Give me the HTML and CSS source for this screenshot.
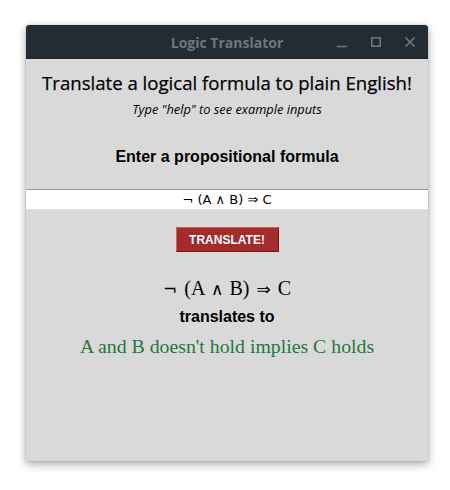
FILE: index.html
```html
<!DOCTYPE html>
<html>
<head>
<meta charset="utf-8">
<title>Logic Translator</title>
<link rel="stylesheet" href="styles.css">
</head>
<body>
<div class="window">
  <div class="titlebar">
    <span class="title">Logic Translator</span>
    <div class="controls">
      <svg class="ctl" width="12" height="12" viewBox="0 0 12 12"><path d="M1 10.5h10" stroke="#6d777e" stroke-width="1.6" fill="none"/></svg>
      <svg class="ctl" width="12" height="12" viewBox="0 0 12 12"><rect x="1.8" y="1.8" width="8.4" height="8.4" stroke="#6d777e" stroke-width="1.6" fill="none"/></svg>
      <svg class="ctl" width="12" height="12" viewBox="0 0 12 12"><path d="M1.5 1.5l9 9M10.5 1.5l-9 9" stroke="#6d777e" stroke-width="1.7" fill="none"/></svg>
    </div>
  </div>
  <div class="content">
    <h1 class="heading">Translate a logical formula to plain English!</h1>
    <p class="hint">Type "help" to see example inputs</p>
    <h2 class="label">Enter a propositional formula</h2>
    <input class="formula-input" type="text" value="¬ (A ∧ B) ⇒ C">
    <button class="translate-btn">TRANSLATE!</button>
    <div class="math"><span class="op">¬</span><span>(A</span><span class="op bin">∧</span><span>B)</span><span class="op rel">⇒</span><span>C</span></div>
    <div class="translates">translates to</div>
    <div class="result">A and B doesn't hold implies C holds</div>
  </div>
</div>
</body>
</html>
```
FILE: styles.css
```css
html, body {
  margin: 0;
  padding: 0;
  background: #ffffff;
}
body {
  padding: 25px 0 0 26px;
  height: 490px;
  box-sizing: border-box;
}
.window {
  width: 402px;
  height: 436px;
  display: flex;
  flex-direction: column;
  border-radius: 3px 3px 0 0;
  box-shadow: 0 3px 10px rgba(0,0,0,0.35), 0 0 2px rgba(0,0,0,0.2);
  overflow: hidden;
}
.titlebar {
  height: 34px;
  flex: none;
  background: #232c32;
  display: flex;
  align-items: center;
  justify-content: center;
  position: relative;
}
.title {
  font-family: "Open Sans", sans-serif;
  font-weight: 700;
  font-size: 14px;
  color: #6d777e;
}
.controls {
  position: absolute;
  right: 12px;
  top: 11px;
  display: flex;
  gap: 22px;
}
.ctl {
  display: block;
}
.content {
  flex: 1;
  background: #d9d9d9;
  display: flex;
  flex-direction: column;
  align-items: center;
}
.heading {
  font-family: "Open Sans", sans-serif;
  font-weight: 500;
  font-size: 18.6px;
  color: #000;
  margin: 11px 0 0;
  line-height: 26px;
  -webkit-text-stroke: 0.25px #000;
}
.hint {
  font-family: "Open Sans", sans-serif;
  font-style: italic;
  font-weight: 500;
  font-size: 12.8px;
  color: #000;
  margin: 4px 0 0;
  line-height: 18px;
}
.label {
  font-family: "Liberation Sans", Arial, sans-serif;
  font-weight: 700;
  font-size: 16px;
  color: #000;
  margin: 29px 0 0;
  line-height: 20px;
}
.formula-input {
  align-self: stretch;
  margin: 22px 0 0;
  height: 21px;
  box-sizing: border-box;
  border: none;
  border-top: 1px solid #999999;
  border-bottom: 1px solid #e2e2e2;
  background: #ffffff;
  text-align: center;
  font-family: "DejaVu Sans", sans-serif;
  font-size: 13px;
  color: #000;
  padding: 0;
  outline: none;
}
.translate-btn {
  margin-top: 17px;
  width: 103px;
  height: 25px;
  background: #a52a2a;
  color: #ffffff;
  font-family: "Liberation Sans", Arial, sans-serif;
  font-weight: 700;
  font-size: 12px;
  border: 1px solid;
  border-color: #c86060 #6e1a1a #6e1a1a #c86060;
  padding: 0;
}
.math {
  margin-top: 24px;
  display: flex;
  align-items: baseline;
  font-family: "Liberation Serif", "DejaVu Serif", serif;
  font-size: 20px;
  line-height: 24px;
  color: #000;
}
.op {
  font-family: "DejaVu Sans", sans-serif;
  font-size: 17px;
  margin-right: 7px;
}
.bin {
  margin: 0 6px;
  font-weight: 300;
}
.rel {
  margin: 0 7px 0 7px;
}
.translates {
  margin-top: 6px;
  font-family: "Liberation Sans", Arial, sans-serif;
  font-weight: 700;
  font-size: 16px;
  line-height: 20px;
  color: #000;
}
.result {
  margin-top: 7px;
  font-family: "Liberation Serif", serif;
  font-size: 19.8px;
  line-height: 24px;
  color: #23793a;
}
```
